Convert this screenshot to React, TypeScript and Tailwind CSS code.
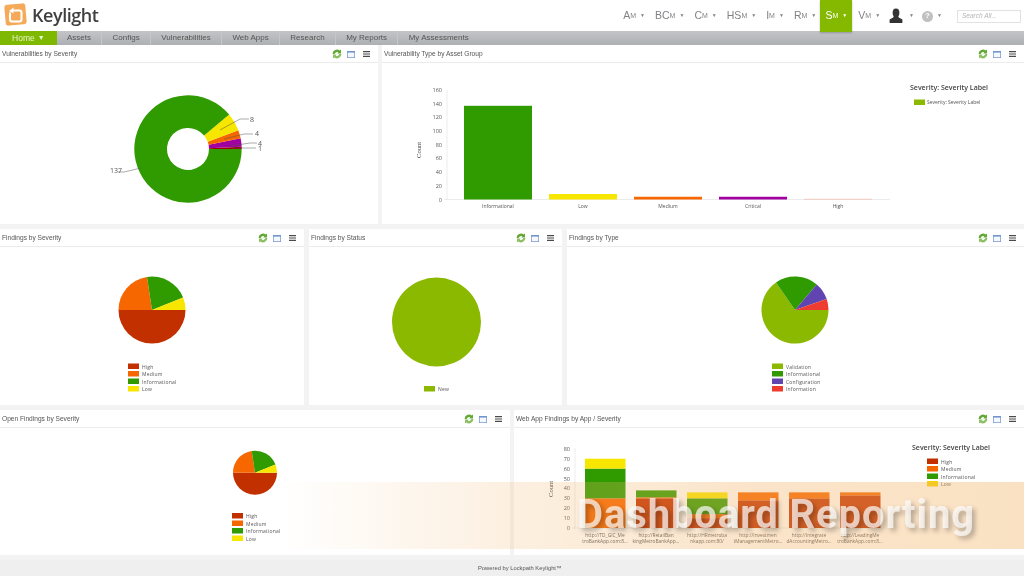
import React from "react";

const C = { high: "#c23000", med: "#f76700", info: "#2f9b00", low: "#f7e600", purple: "#a000a0", lime: "#8ab900", violet: "#6045b0", red: "#ee3c30" };

function slicePath(cx: number, cy: number, r: number, a0: number, a1: number, ir = 0) {
  const rad = (a: number) => (a * Math.PI) / 180;
  const p = (R: number, a: number) => `${cx + R * Math.cos(rad(a))} ${cy - R * Math.sin(rad(a))}`;
  const large = a1 - a0 > 180 ? 1 : 0;
  if (ir > 0) return `M${p(r, a0)} A${r} ${r} 0 ${large} 0 ${p(r, a1)} L${p(ir, a1)} A${ir} ${ir} 0 ${large} 1 ${p(ir, a0)} Z`;
  return `M${cx} ${cy} L${p(r, a0)} A${r} ${r} 0 ${large} 0 ${p(r, a1)} Z`;
}

function Pie({ cx, cy, r, slices, ir = 0 }: { cx: number; cy: number; r: number; ir?: number; slices: [number, number, string][] }) {
  return <g>{slices.map(([a, b, c], i) => <path key={i} d={slicePath(cx, cy, r, a, b, ir)} fill={c} />)}</g>;
}

function Legend({ x, y, items, fs = 5 }: { x: number; y: number; items: [string, string][]; fs?: number }) {
  return (
    <g>
      {items.map(([t, c], i) => (
        <g key={t}>
          <rect x={x} y={y + i * 7.5} width={11} height={5.5} fill={c} />
          <text x={x + 14} y={y + i * 7.5 + 5} fontSize={fs} fill="#555" letterSpacing={0.2} fontFamily="'Open Sans',sans-serif">{t}</text>
        </g>
      ))}
    </g>
  );
}

function Icons() {
  return (
    <div className="flex items-center mt-[1px]">
      <svg width="10" height="10" viewBox="0 0 10 10" className="mr-[5px]">
        <path d="M.6 5a4.4 4.4 0 0 1 7.2-3.4l1.2-1v4H5.2l1.2-1.2A2.6 2.6 0 0 0 2.700 5z" fill="#63a833" />
        <path d="M9.400 5a4.400 4.400 0 0 1-7.200 3.400l-1.200 1v-4h3.800L3.600 6.600A2.600 2.600 0 0 0 7.300 5z" fill="#8cc063" />
      </svg>
      <svg width="8" height="7" viewBox="0 0 8 7" className="mr-[8px]">
        <rect x="0.4" y="0.4" width="7.2" height="6.2" fill="#f4f7fc" stroke="#7d9fd2" strokeWidth="0.8" />
        <rect x="0.4" y="0.4" width="7.2" height="1.1" fill="#5a84c2" />
      </svg>
      <svg width="7" height="6" viewBox="0 0 7 6">
        <path d="M0 .7h7M0 3h7M0 5.300h7" stroke="#4a4a4a" strokeWidth="1.2" />
      </svg>
    </div>
  );
}

function Panel({ title, w, h, vb, children, grow }: { title: string; w: string; h: string; vb: string; children: React.ReactNode; grow?: boolean }) {
  return (
    <section className={`${w} ${grow ? "flex-1" : "shrink-0"} flex flex-col bg-white`}>
      <header className="h-[18px] shrink-0 flex items-center justify-between pl-[2px] pr-[8px] border-b border-[#ececec]">
        <h2 className="text-[6.6px] font-normal text-[#555] mt-[1px]">{title}</h2>
        <Icons />
      </header>
      <div className={h}>
        <svg viewBox={vb} className="block w-full h-full" fontFamily="'Open Sans',sans-serif">{children}</svg>
      </div>
    </section>
  );
}

const sevPie: [number, number, string][] = [[180, 360, C.high], [98.6, 180, C.med], [21.7, 98.6, C.info], [0, 21.7, C.low]];

function MenuItem({ a, active }: { a: string; active?: boolean }) {
  return (
    <div className={`h-[32px] flex items-center justify-center ${active ? "bg-[#84b900] text-white w-[32px] ml-[-6px] mr-[-4px] shadow-[0_1px_2px_rgba(0,0,0,0.25)]" : "text-[#808285]"}`}>
      <span className="text-[10.5px]">{a}</span><span className="text-[7px] mt-[1px]">M</span>
      <span className="text-[5px] ml-[4px]">▼</span>
    </div>
  );
}

const navItems = ["Assets", "Configs", "Vulnerabilities", "Web Apps", "Research", "My Reports", "My Assessments"];

export default function App() {
  return (
    <div className="relative w-[1024px] h-[576px] overflow-hidden bg-[#f3f3f3] font-['Liberation_Sans',sans-serif] blur-[0.45px]">
      <div className="h-[31px] bg-white flex items-start justify-between">
        <div className="flex items-center pl-[4px] pt-[3px]">
          <svg width="23" height="23" viewBox="0 0 23 23">
            <rect x="1" y="1" width="21" height="21" rx="3" fill="#f4aa58" transform="rotate(-5 11.500 11.500)" />
            <path d="M9 7.500h6.500a2 2 0 0 1 2 2v7a2 2 0 0 1-2 2H8a2 2 0 0 1-2-2V9.500" fill="none" stroke="#fff" strokeWidth="2" />
            <path d="M5 8l4.500-3.500v6z" fill="#fff" />
          </svg>
          <span className="ml-[5px] text-[18px] font-['Open_Sans',sans-serif] font-semibold tracking-[-0.45px] text-[#3f3f3f] leading-none">Keylight</span>
        </div>
        <div className="flex items-center h-[32px] relative z-10 pr-[3px]">
          <div className="flex items-center gap-[10px]">
            <MenuItem a="A" />
            <MenuItem a="BC" />
            <MenuItem a="C" />
            <MenuItem a="HS" />
            <MenuItem a="I" />
            <MenuItem a="R" />
            <MenuItem a="S" active />
            <MenuItem a="V" />
          </div>
          <svg width="16" height="16" viewBox="0 0 16 16" className="ml-[8px]">
            <ellipse cx="8" cy="4.800" rx="3.400" ry="4.300" fill="#333" />
            <path d="M5.800 8l4.400 0 .6 1.600 3.600 1.800V15H1.600v-3.600l3.600-1.800z" fill="#333" />
          </svg>
          <span className="text-[5px] text-[#808285] ml-[5px]">▼</span>
          <div className="ml-[8px] w-[11px] h-[11px] rounded-full bg-[#bfc0c2] text-white text-[8px] font-bold flex items-center justify-center">?</div>
          <span className="text-[5px] text-[#808285] ml-[4px]">▼</span>
          <div className="ml-[15px] w-[64px] h-[13px] border border-[#e2e2e2] bg-white flex items-center pl-[4px] text-[6.5px] italic text-[#b5b5b5]">Search All...</div>
        </div>
      </div>

      <nav className="h-[14px] flex bg-[linear-gradient(180deg,#c2c4c7,#adb0b3)]">
        <div className="w-[56.7px] bg-[#7fb800] text-[#e8f5c8] text-[8.500px] flex items-center justify-center gap-[3px]">
          Home <span className="text-[7px]">▼</span>
        </div>
        {navItems.map((n) => (
          <div key={n} className="px-[10.3px] flex items-center text-[8px] text-[#555] border-r border-[#c4c6c8] last:border-r-0">{n}</div>
        ))}
      </nav>

      <div className="flex flex-col gap-[5px]">
        <div className="flex gap-[4px] h-[179px]">
          <Panel title="Vulnerabilities by Severity" w="w-[378px]" h="h-[161px]" vb="0 63 378 161">
            <Pie cx={188} cy={149} r={53.7} ir={21} slices={[[0, 2.3, "#a00000"], [2.3, 11.5, C.purple], [11.5, 20.5, C.med], [20.5, 40, C.low], [40, 359.99, C.info]]} />
            <g stroke="#555" strokeWidth="0.5" fill="none">
              <path d="M220 130l20-11h9M224 139l20-5h9M230 146l20-3h7M232 148h24M141 168l-17 4h-6" />
            </g>
            <g fontSize="7" fill="#555">
              <text x="250" y="122">8</text><text x="255" y="136">4</text><text x="258" y="145.500">4</text><text x="258" y="151">1</text><text x="110" y="173">137</text>
            </g>
          </Panel>
          <Panel title="Vulnerability Type by Asset Group" w="" grow h="h-[161px]" vb="382 63 642 161">
            <path d="M447 90v110M444 199.500h446" stroke="#e4e4e4" strokeWidth="0.7" fill="none" />
            {[0, 20, 40, 60, 80, 100, 120, 140, 160].map((v) => (
              <text key={v} x="442" y={199.5 - v * 0.684 + 2} fontSize="5.500" fill="#555" textAnchor="end">{v}</text>
            ))}
            <text transform="translate(421 150) rotate(-90)" fontSize="6.500" fill="#444" textAnchor="middle" fontFamily="'Liberation Serif',serif">Count</text>
            {[[464, 137, C.info, "Informational"], [549, 8, C.low, "Low"], [634, 4, C.med, "Medium"], [719, 4, C.purple, "Critical"], [804, 1, "#f0b8a8", "High"]].map(([x, v, c, l]) => (
              <g key={l as string}>
                <rect x={x as number} y={199.5 - (v as number) * 0.684} width="68" height={(v as number) * 0.684} fill={c as string} />
                <text x={(x as number) + 34} y="208" fontSize="5" fill="#555" textAnchor="middle">{l as string}</text>
              </g>
            ))}
            <text x="910" y="90" fontSize="7" fontWeight="600" fill="#444">Severity: Severity Label</text>
            <rect x="914" y="99.500" width="11" height="5.500" fill={C.lime} />
            <text x="927" y="104" fontSize="5" fill="#555">Severity: Severity Label</text>
          </Panel>
        </div>

        <div className="flex gap-[5px] h-[176px]">
          <Panel title="Findings by Severity" w="w-[304px]" h="h-[158px]" vb="0 248 304 158">
            <Pie cx={152} cy={311} r={33.5} slices={sevPie} />
            <Legend x={128} y={364.5} items={[["High", C.high], ["Medium", C.med], ["Informational", C.info], ["Low", C.low]]} />
          </Panel>
          <Panel title="Findings by Status" w="w-[253px]" h="h-[158px]" vb="309 248 253 158">
            <circle cx="436.500" cy="323" r="44.500" fill={C.lime} />
            <Legend x={424} y={387} items={[["New", C.lime]]} />
          </Panel>
          <Panel title="Findings by Type" w="" grow h="h-[158px]" vb="567 248 457 158">
            <Pie cx={795} cy={311} r={33.5} slices={[[124.6, 360, C.lime], [49.5, 124.6, C.info], [19, 49.5, C.violet], [0, 19, C.red]]} />
            <Legend x={772} y={364.5} items={[["Validation", C.lime], ["Informational", C.info], ["Configuration", C.violet], ["Information", C.red]]} />
          </Panel>
        </div>

        <div className="flex gap-[4px] h-[145px]">
          <Panel title="Open Findings by Severity" w="w-[510px]" h="h-[127px]" vb="0 429 510 127">
            <Pie cx={255} cy={473.7} r={22} slices={sevPie} />
            <Legend x={232} y={514} items={[["High", C.high], ["Medium", C.med], ["Informational", C.info], ["Low", C.low]]} />
          </Panel>
          <Panel title="Web App Findings by App / Severity" w="" grow h="h-[127px]" vb="514 429 510 127">
            <path d="M575 449v81M572 529h310" stroke="#e4e4e4" strokeWidth="0.7" fill="none" />
            {[0, 10, 20, 30, 40, 50, 60, 70, 80].map((v) => (
              <text key={v} x="570" y={529 - v * 0.99 + 2} fontSize="5.500" fill="#555" textAnchor="end">{v}</text>
            ))}
            <text transform="translate(553 490) rotate(-90)" fontSize="6.500" fill="#444" textAnchor="middle" fontFamily="'Liberation Serif',serif">Count</text>
            {([
              [585, [[30, C.med], [30, C.info], [10, C.low]], "http://TD_GIC_Me", "troBankApp.com:8..."],
              [636, [[30, C.high], [1, C.med], [7, C.info]], "http://RetailBan", "kingMetroBankApp..."],
              [687, [[10, C.high], [4, C.med], [16, C.info], [6, C.low]], "http://HRmetroba", "nkapp.com:80/"],
              [738, [[28, C.high], [8, C.med]], "http://Investmen", "tManagementMetro..."],
              [789, [[30, C.high], [6, C.med]], "http://Integrate", "dAccountingMetro..."],
              [840, [[33, C.high], [3, C.med]], "http://LeadingMe", "troBankApp.com:8..."],
            ] as [number, [number, string][], string, string][]).map(([x, segs, l1, l2]) => {
              let acc = 0;
              return (
                <g key={l1}>
                  {segs.map(([v, c], i) => {
                    const y = 529 - (acc + v) * 0.99;
                    acc += v;
                    return <rect key={i} x={x} y={y} width="40.500" height={v * 0.99} fill={c} />;
                  })}
                  <text x={x + 20} y="538" fontSize="4.800" fill="#555" textAnchor="middle">{l1}</text>
                  <text x={x + 20} y="544" fontSize="4.800" fill="#555" textAnchor="middle">{l2}</text>
                </g>
              );
            })}
            <text x="912" y="451" fontSize="7" fontWeight="600" fill="#444">Severity: Severity Label</text>
            <Legend x={927} y={459.5} items={[["High", C.high], ["Medium", C.med], ["Informational", C.info], ["Low", "#f7d400"]]} />
          </Panel>
        </div>

        <footer className="h-[16px] bg-[#efefef] flex items-center pl-[478px] text-[5.8px] text-[#555]">Powered by Lockpath Keylight™</footer>
      </div>

      <div className="absolute left-[280px] right-0 top-[482px] h-[67px] bg-[linear-gradient(90deg,rgba(242,180,105,0)_0%,rgba(242,180,105,0.2)_30%,rgba(242,180,105,0.36)_65%,rgba(242,180,105,0.4)_100%)]" />
      <div className="absolute left-[577px] top-[497px] text-[40px] leading-[36px] font-bold font-['Roboto',sans-serif] tracking-[0.9px] text-white/70 [text-shadow:3px_3px_5px_rgba(0,0,0,0.28)] whitespace-nowrap">Dashboard Reporting</div>
    </div>
  );
}
